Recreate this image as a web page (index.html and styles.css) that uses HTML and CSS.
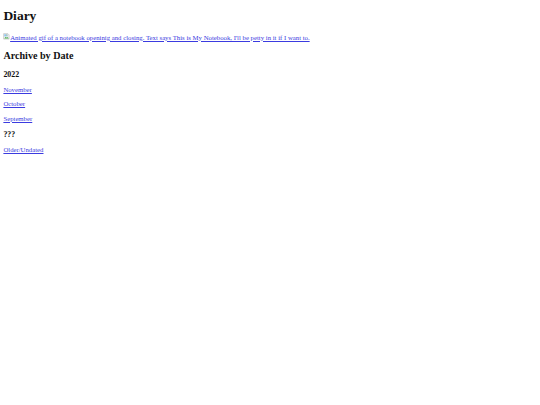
FILE: index.html
```html
<!DOCTYPE html>
<html lang="en">
<head>
<meta charset="utf-8">
<title>Diary</title>
<link rel="stylesheet" href="styles.css">
</head>
<body class="page">
<h1 class="title">Diary</h1>
<p class="banner"><a class="link" href="#"><svg class="broken" viewBox="0 0 16 16" aria-hidden="true"><path d="M1.5 1.5h10l3 3v10h-13z" fill="#f4f4f4" stroke="#9a9a9a"/><path d="M3 13l3.5-4 2.5 2.5 2-2 2.5 3.5z" fill="#4caf50"/><rect x="3" y="3" width="8" height="5" fill="#8ec5f0"/><circle cx="9" cy="5" r="1.2" fill="#f5d04a"/></svg>Animated gif of a notebook openinig and closing. Text says This is My Notebook, I'll be petty in it if I want to.</a></p>
<h2 class="section">Archive by Date</h2>
<h3 class="year">2022</h3>
<p class="entry"><a class="link" href="#">November</a></p>
<p class="entry"><a class="link" href="#">October</a></p>
<p class="entry"><a class="link" href="#">September</a></p>
<h3 class="year">???</h3>
<p class="entry"><a class="link" href="#">Older/Undated</a></p>
</body>
</html>
```
FILE: styles.css
```css
:root {
  --s: 0.421875;
}
html {
  background: #ffffff;
}
.page {
  margin: calc(8px * var(--s));
  font-family: "Liberation Serif", "Times New Roman", serif;
  font-size: calc(16px * var(--s));
  line-height: calc(18px * var(--s));
  color: #111111;
}
.title {
  font-size: calc(32px * var(--s));
  line-height: calc(36.8px * var(--s));
  margin: calc(12px * var(--s)) 0 calc(21.44px * var(--s));
  font-weight: bold;
}
.section {
  font-size: calc(24px * var(--s));
  line-height: calc(27.6px * var(--s));
  margin: calc(19.92px * var(--s)) 0;
  font-weight: bold;
}
.year {
  font-size: calc(18.72px * var(--s));
  line-height: calc(21.5px * var(--s));
  margin: calc(18.72px * var(--s)) 0 calc(17px * var(--s));
  font-weight: bold;
}
.banner,
.entry {
  margin: calc(16px * var(--s)) 0;
}
.link {
  color: #3b3be0;
  text-decoration: underline;
}
.broken {
  width: calc(16px * var(--s));
  height: calc(16px * var(--s));
  vertical-align: baseline;
}
```
